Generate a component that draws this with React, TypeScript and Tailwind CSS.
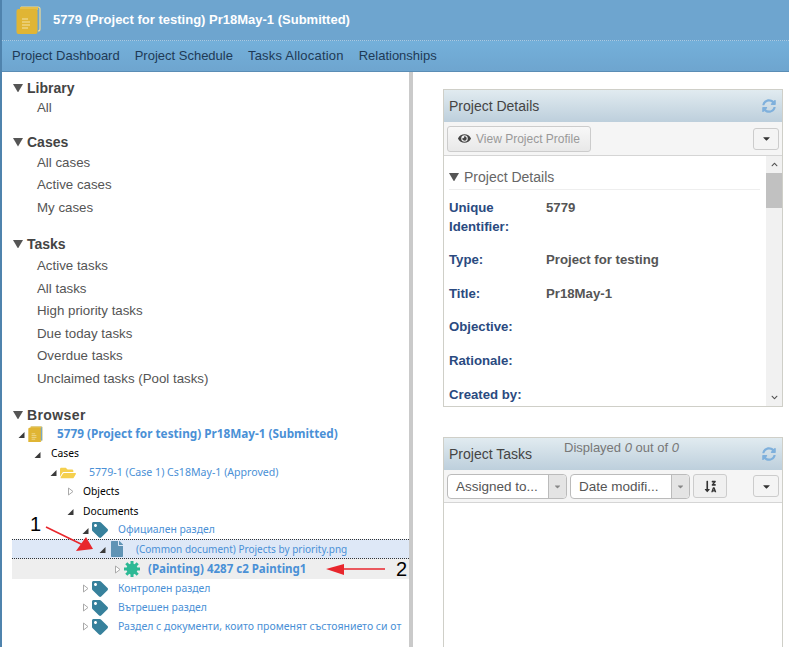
import { FaEye, FaSyncAlt, FaTag, FaFile, FaFolderOpen, FaCaretDown, FaSortAlphaDownAlt, FaChevronUp, FaChevronDown } from "react-icons/fa";

const sans = "font-['Liberation_Sans',Arial,sans-serif]";
const tree = "font-['Noto_Sans',Tahoma,sans-serif]";

function BookIcon({ size }: { size: number }) {
    return (
        <svg width={size} height={size * 1.12} viewBox="0 0 25 28" className="shrink-0">
            <path d="M5 1h17a2 2 0 0 1 2 2v20a2 2 0 0 1-2 2" fill="#6ea5cf" stroke="#f1dc94" strokeWidth="1.2" />
            <rect x="4" y="1" width="18" height="3" fill="#e6c04c" />
            <rect x="0.5" y="3" width="21" height="25" rx="2" fill="#e0b534" />
            <path d="M6 13h6M6 16h8M6 19h8M6 22h6" stroke="#f3e3a8" strokeWidth="1.2" />
        </svg>
    );
}

function Gear() {
    return (
        <svg width="16" height="16" viewBox="0 0 16 16" className="shrink-0">
            <circle cx="8" cy="8" r="5.5" fill="#2db995" />
            <path d="M8 0v16M0 8h16M2.3 2.3l11.4 11.4M13.7 2.3L2.3 13.7" stroke="#2db995" strokeWidth="3" />
        </svg>
    );
}

function Twisty({ open }: { open?: boolean }) {
    return (
        <svg width="7" height="9" viewBox="0 0 7 9" className="shrink-0">
            {open ? <path d="M0.5 8L6.5 2v6z" fill="#3a3a3a" /> : <path d="M1.5 1l4.5 3.5L1.5 8z" fill="#fff" stroke="#aaa" />}
        </svg>
    );
}

function Caret({ w }: { w: number }) {
    return (
        <svg width={w} height={w * 0.85} viewBox="0 0 10 8.5" className="shrink-0">
            <path d="M0 0h10L5 8.5z" fill="#555" />
        </svg>
    );
}

function Section({ title, items, className, listClass }: { title: string; items: string[]; className: string; listClass?: string }) {
    return (
        <div className={className}>
            <div className="flex items-center gap-[4px] h-[18px] pl-[11px] text-[14px] font-bold text-[#444]">
                <Caret w={10} />
                {title}
            </div>
            <div className={`pl-[35px] text-[13.3px] text-[#555] leading-[22.5px] ${listClass ?? ""}`}>
                {items.map((item) => (
                    <div key={item}>{item}</div>
                ))}
            </div>
        </div>
    );
}

function Row({ indent, open, icon, text, gap, h, className, textClass }: { indent: number; open?: boolean; icon?: React.ReactNode; text: string; gap: number; h: number; className?: string; textClass: string }) {
    return (
        <div className={`flex items-center whitespace-nowrap overflow-hidden ${className ?? ""}`} style={{ paddingLeft: indent, height: h }}>
            <Twisty open={open} />
            <span className="ml-[3px] flex shrink-0 items-center">{icon}</span>
            <span className={textClass} style={{ marginLeft: gap }}>{text}</span>
        </div>
    );
}

const tag = <FaTag size={16} className="text-[#37819c]" />;
const link = "text-[10.4px] text-[#4a90d6]";
const plain = "text-[10.3px] text-black";

function DetailRow({ label, value, h }: { label: React.ReactNode; value?: string; h: number }) {
    return (
        <div className="flex" style={{ height: h }}>
            <div className="w-[97px] font-bold text-[#2a4a80] leading-[19px]">{label}</div>
            <div className="font-bold text-[#555] leading-[19px]">{value}</div>
        </div>
    );
}

function SplitSelect({ label, w }: { label: string; w: number }) {
    return (
        <div className="flex h-[25px] rounded-[4px] border border-[#bbb] bg-white" style={{ width: w }}>
            <div className="flex-1 pl-[8px] text-[13.5px] leading-[23px] text-[#555]">{label}</div>
            <div className="w-[18px] flex items-center justify-center border-l border-[#bbb] bg-[#e4e4e4] text-[#888] rounded-r-[4px]">
                <FaCaretDown size={9} />
            </div>
        </div>
    );
}

function MenuBtn() {
    return (
        <div className="ml-auto flex h-[22px] w-[26px] items-center justify-center rounded-[3px] border border-[#ccc] bg-[#f4f4f4] text-[#333]">
            <FaCaretDown size={11} />
        </div>
    );
}

function PanelHeader({ title }: { title: string }) {
    return (
        <div className="flex h-[32px] items-center justify-between pl-[5px] pr-[6px] bg-gradient-to-b from-[#e1ebf0] to-[#bdcfdc] text-[14px] text-[#444]">
            {title}
            <FaSyncAlt size={14} className="text-[#7fb0dc]" />
        </div>
    );
}

export default function App() {
    return (
        <div className={`${sans} relative flex h-[647px] w-[789px] flex-col overflow-hidden bg-white border-l-2 border-[#4f83ad]`}>
            <div className="flex h-[41px] shrink-0 items-center bg-[#6ea5cf] pl-[14px] border-b border-dotted border-[#a9cbe3]">
                <BookIcon size={25} />
                <span className="ml-[12px] text-[13px] font-bold text-white">5779 (Project for testing) Pr18May-1 (Submitted)</span>
            </div>
            <div className="flex h-[31px] shrink-0 items-center gap-[15px] bg-gradient-to-b from-[#74b0da] to-[#6ea5cf] pl-[10px] text-[13px] text-[#1e3a56] border-b border-[#5a8db5]">
                <span>Project Dashboard</span>
                <span>Project Schedule</span>
                <span className="tracking-[0.2px]">Tasks Allocation</span>
                <span>Relationships</span>
            </div>
            <div className="flex flex-1 min-h-0">
                <div className="w-[407px] shrink-0 pt-[7px] overflow-hidden">
                    <Section title="Library" items={["All"]} className="" />
                    <Section title="Cases" items={["All cases", "Active cases", "My cases"]} className="mt-[14px]" />
                    <Section title="Tasks" items={["Active tasks", "All tasks", "High priority tasks", "Due today tasks", "Overdue tasks", "Unclaimed tasks (Pool tasks)"]} className="mt-[16px]" listClass="pt-[2px]" />
                    <div className="mt-[16px]">
                        <div className="flex items-center gap-[4px] h-[18px] pl-[11px] text-[14px] font-bold text-[#444] tracking-[0.4px]">
                            <Caret w={10} />
                            Browser
                        </div>
                        <div className={`${tree} ml-[10px]`}>
                            <Row indent={6} open icon={<BookIcon size={15} />} text="5779 (Project for testing) Pr18May-1 (Submitted)" gap={14} h={20} textClass="text-[11.75px] font-bold text-[#4a90d6]" />
                            <Row indent={22} open text="Cases" gap={7} h={20} textClass={plain} />
                            <Row indent={38} open icon={<FaFolderOpen size={16} className="text-[#f5d04e]" />} text="5779-1 (Case 1) Cs18May-1 (Approved)" gap={13} h={17} textClass="text-[10.6px] text-[#4a90d6]" />
                            <Row indent={55} text="Objects" gap={6} h={21} textClass={plain} />
                            <Row indent={55} open text="Documents" gap={6} h={19} textClass={plain} />
                            <Row indent={70} open icon={tag} text="Официален раздел" gap={10} h={18} textClass={link} />
                            <Row indent={87} open icon={<FaFile size={16} className="text-[#5f93b5]" />} text="(Common document) Projects by priority.png" gap={11} h={20} className="bg-[#dee8f7] border-y border-dotted border-[#333]" textClass="text-[10px] text-[#4a90d6]" />
                            <Row indent={102} icon={<Gear />} text="(Painting) 4287 c2 Painting1" gap={8} h={20} className="bg-[#eeeeee]" textClass="text-[11.5px] font-bold text-[#4a90d6]" />
                            <Row indent={70} icon={tag} text="Контролен раздел" gap={10} h={19} textClass={link} />
                            <Row indent={70} icon={tag} text="Вътрешен раздел" gap={10} h={19} textClass={link} />
                            <Row indent={70} icon={tag} text="Раздел с документи, които променят състоянието си от" gap={10} h={19} textClass="text-[10.5px] text-[#4a90d6]" />
                        </div>
                    </div>
                </div>
                <div className="w-[4px] shrink-0 bg-[#cacaca]" />
                <div className="flex-1 pl-[30px] pr-[6px] pt-[17px] min-w-0">
                    <div className="flex h-[318px] flex-col border border-[#cfcfc8]">
                        <PanelHeader title="Project Details" />
                        <div className="flex h-[34px] shrink-0 items-center bg-[#f5f5f5] border-b border-[#d5d5d5] pl-[3px] pr-[3px]">
                            <div className="flex h-[26px] items-center gap-[5px] rounded-[3px] border border-[#ccc] bg-gradient-to-b from-[#f8f8f8] to-[#e8e8e8] px-[10px] text-[12px] text-[#999]">
                                <FaEye size={13} className="text-[#444]" />
                                View Project Profile
                            </div>
                            <MenuBtn />
                        </div>
                        <div className="flex flex-1 min-h-0">
                            <div className="flex-1 overflow-hidden pl-[5px] pr-[6px] pt-[12px] text-[13.2px]">
                                <div className="flex items-center gap-[5px] h-[19px] text-[14px] text-[#666] pb-[1px]">
                                    <Caret w={10} />
                                    Project Details
                                </div>
                                <div className="border-t border-[#eee] mt-[2px] pt-[8px]">
                                    <DetailRow label={<>Unique<br />Identifier:</>} value="5779" h={52} />
                                    <DetailRow label="Type:" value="Project for testing" h={34} />
                                    <DetailRow label="Title:" value="Pr18May-1" h={33} />
                                    <DetailRow label="Objective:" h={34} />
                                    <DetailRow label="Rationale:" h={34} />
                                    <DetailRow label="Created by:" h={20} />
                                </div>
                            </div>
                            <div className="flex w-[16px] shrink-0 flex-col items-center bg-[#f1f1f1] text-[#505050]">
                                <div className="flex h-[17px] items-center justify-center"><FaChevronUp size={7} /></div>
                                <div className="h-[35px] w-full bg-[#c1c1c1]" />
                                <div className="mt-auto flex h-[17px] items-center justify-center"><FaChevronDown size={7} /></div>
                            </div>
                        </div>
                    </div>
                    <div className="relative mt-[30px] h-[220px] border border-[#cfcfc8]">
                        <PanelHeader title="Project Tasks" />
                        <span className="absolute left-[120px] top-0 text-[13px] text-[#777]">Displayed <i>0</i> out of <i>0</i></span>
                        <div className="flex h-[33px] items-center gap-[3px] bg-[#f5f5f5] border-b border-[#d5d5d5] pl-[3px] pr-[3px]">
                            <SplitSelect label="Assigned to..." w={120} />
                            <SplitSelect label="Date modifi..." w={120} />
                            <div className="flex h-[24px] w-[34px] items-center justify-center rounded-[3px] border border-[#ccc] bg-[#f0f0f0] text-[#333]">
                                <FaSortAlphaDownAlt size={13} />
                            </div>
                            <MenuBtn />
                        </div>
                    </div>
                </div>
            </div>
            <svg className="absolute left-[-2px] top-0 pointer-events-none" width="789" height="647">
                <path d="M46 527L85 546" stroke="#e8262c" strokeWidth="1.5" />
                <path d="M76 551L93 549L86 537z" fill="#e8262c" />
                <path d="M385 569H340" stroke="#e8262c" strokeWidth="1.5" />
                <path d="M326 569L344 564V575z" fill="#e8262c" />
            </svg>
            <span className="absolute left-[28px] top-[512px] text-[20px] leading-[24px] text-black">1</span>
            <span className="absolute left-[394px] top-[557px] text-[20px] leading-[24px] text-black">2</span>
        </div>
    );
}
